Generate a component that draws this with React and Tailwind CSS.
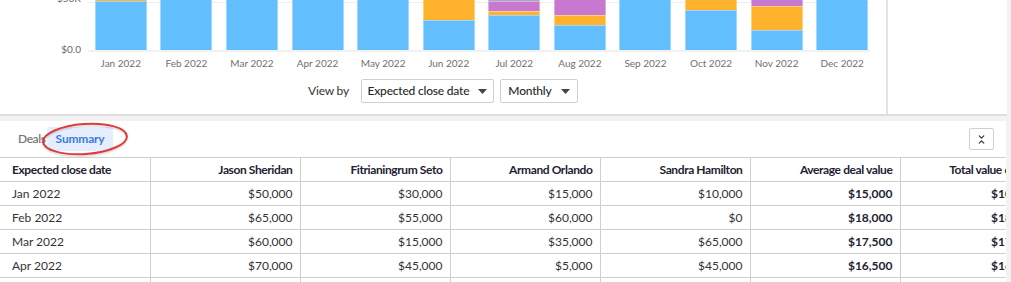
import React from "react";
import { ChevronsDownUp } from "lucide-react";

const BLUE = "#62befc";
const ORANGE = "#ffb22c";
const PURPLE = "#c878cf";
const GRAY = "#a3abbd";

const bars = [
  { m: "Jan 2022", s: [[BLUE, 49], [ORANGE, 12]] },
  { m: "Feb 2022", s: [[BLUE, 60]] },
  { m: "Mar 2022", s: [[BLUE, 60]] },
  { m: "Apr 2022", s: [[BLUE, 60]] },
  { m: "May 2022", s: [[BLUE, 60]] },
  { m: "Jun 2022", s: [[BLUE, 30], [ORANGE, 30]] },
  { m: "Jul 2022", s: [[BLUE, 35], [ORANGE, 4], [PURPLE, 10], [GRAY, 6]] },
  { m: "Aug 2022", s: [[BLUE, 25], [ORANGE, 10], [PURPLE, 25]] },
  { m: "Sep 2022", s: [[BLUE, 60]] },
  { m: "Oct 2022", s: [[BLUE, 40], [ORANGE, 20]] },
  { m: "Nov 2022", s: [[BLUE, 20], [ORANGE, 24], [PURPLE, 15]] },
  { m: "Dec 2022", s: [[BLUE, 60]] },
];

const cols = [
  "Expected close date",
  "Jason Sheridan",
  "Fitrianingrum Seto",
  "Armand Orlando",
  "Sandra Hamilton",
  "Average deal value",
  "Total value of deals",
];

const rows = [
  ["Jan 2022", "$50,000", "$30,000", "$15,000", "$10,000", "$15,000", "$105,000"],
  ["Feb 2022", "$65,000", "$55,000", "$60,000", "$0", "$18,000", "$180,000"],
  ["Mar 2022", "$60,000", "$15,000", "$35,000", "$65,000", "$17,500", "$175,000"],
  ["Apr 2022", "$70,000", "$45,000", "$5,000", "$45,000", "$16,500", "$165,000"],
  ["May 2022", "$40,000", "$20,000", "$25,000", "$30,000", "$15,000", "$115,000"],
];

function Caret() {
  return (
    <svg width="9" height="5" viewBox="0 0 9 5" className="ml-[9px] shrink-0">
      <path d="M0 0 L9 0 L4.5 5 Z" fill="#444" />
    </svg>
  );
}

export default function App() {
  return (
    <div className="w-[1011px] h-[282px] overflow-hidden bg-[#f2f2f2] font-['Lato',sans-serif] text-[#333]">
      {/* Top chart card */}
      <div className="mr-[4px] h-[116px] bg-white border-b-2 border-[#dedede] flex">
        <div className="w-[888px] border-r-2 border-[#e4e4e4] flex flex-col">
          <div className="flex h-[52px]">
            <div className="w-[88px] h-[63px] -mt-[8px] flex flex-col justify-between items-end pr-[7px] text-[10px] leading-[12px] text-[#666]">
              <span>$50K</span>
              <span>$0.0</span>
            </div>
            <div className="w-[787px] h-[52px] flex flex-col">
              <div className="h-[2px] shrink-0" />
              <div className="h-px shrink-0 bg-[#eeeeee] w-[782px]" />
              <div className="h-[50px] shrink-0 grid grid-cols-12 grid-rows-[50px] overflow-hidden -mt-[3px]">
                {bars.map((b) => (
                  <div key={b.m} className="h-[50px] overflow-hidden flex justify-center items-end">
                    <div className="w-[52px] flex flex-col-reverse shrink-0">
                      {b.s.map(([c, h], i) => (
                        <div
                          key={i}
                          className="shrink-0 border-x border-t border-white/40"
                          style={{ backgroundColor: c, height: h }}
                        />
                      ))}
                    </div>
                  </div>
                ))}
              </div>
              <div className="h-[2px] shrink-0 bg-[#f1f1f1] w-[782px]" />
            </div>
          </div>
          <div className="ml-[88px] w-[787px] grid grid-cols-12 pt-[5px] text-[10px] leading-[12px] text-[#707070]">
            {bars.map((b) => (
              <div key={b.m} className="text-center">{b.m}</div>
            ))}
          </div>
          <div className="flex items-center justify-center mt-[10px] text-[12px]">
            <span className="text-[#333] mr-[12px] tracking-[-0.2px]">View by</span>
            <div className="h-[24px] w-[133px] border border-[#cfcfcf] rounded-[2px] flex items-center justify-center font-medium text-[#2a2a2a] tracking-[-0.2px] whitespace-nowrap">
              Expected close date
              <Caret />
            </div>
            <div className="ml-[6px] h-[24px] w-[78px] border border-[#cfcfcf] rounded-[2px] flex items-center justify-center font-medium text-[#2a2a2a] tracking-[-0.2px]">
              Monthly
              <Caret />
            </div>
          </div>
        </div>
        <div className="flex-1" />
      </div>

      {/* Bottom table card */}
      <div className="mt-[5px] mr-[5px] bg-white overflow-hidden relative">
        <div className="h-[36px] flex items-center pl-[18px] pr-[12px] text-[12px]">
          <span className="text-[#777] font-semibold tracking-[-0.4px]">Deals</span>
          <span className="ml-px h-[24px] px-[9px] flex items-center bg-[#e4eefc] text-[#3a7be0] font-bold rounded-[2px] tracking-[-0.2px]">
            Summary
          </span>
          <div className="flex-1" />
          <button className="w-[25px] h-[22px] border border-[#cfcfcf] rounded-[2px] flex items-center justify-center bg-white">
            <ChevronsDownUp size={11} strokeWidth={2.6} color="#333" />
          </button>
        </div>
        <svg className="absolute left-[38px] top-[0px]" width="96" height="40" viewBox="0 0 96 40">
          <ellipse cx="47" cy="20" rx="42" ry="15" transform="rotate(-4 47 20)" fill="none" stroke="rgba(0,0,0,0.10)" strokeWidth="2" />
          <ellipse cx="47" cy="18" rx="42" ry="15" transform="rotate(-4 47 18)" fill="none" stroke="#e03a3a" strokeWidth="2" />
        </svg>
        <table className="w-[1050px] table-fixed border-collapse text-[12px]">
          <thead>
            <tr className="h-[24px]">
              {cols.map((c, i) => (
                <th
                  key={c}
                  className={`w-[150px] border border-[#cfcfcf] border-l-0 font-bold text-[#1e2233] whitespace-nowrap overflow-hidden tracking-[-0.4px] ${
                    i === 0 ? "text-left pl-[12px]" : "text-right pr-[7px]"
                  }`}
                >
                  {c}
                </th>
              ))}
            </tr>
          </thead>
          <tbody>
            {rows.map((r) => (
              <tr key={r[0]} className="h-[24px]">
                {r.map((v, i) => (
                  <td
                    key={i}
                    className={`border border-[#cfcfcf] border-l-0 whitespace-nowrap ${
                      i === 0 ? "text-left pl-[12px]" : "text-right pr-[7px]"
                    } ${i >= 5 ? "font-bold text-[#1e2233]" : "text-[#333]"}`}
                  >
                    {v}
                  </td>
                ))}
              </tr>
            ))}
          </tbody>
        </table>
      </div>
    </div>
  );
}
